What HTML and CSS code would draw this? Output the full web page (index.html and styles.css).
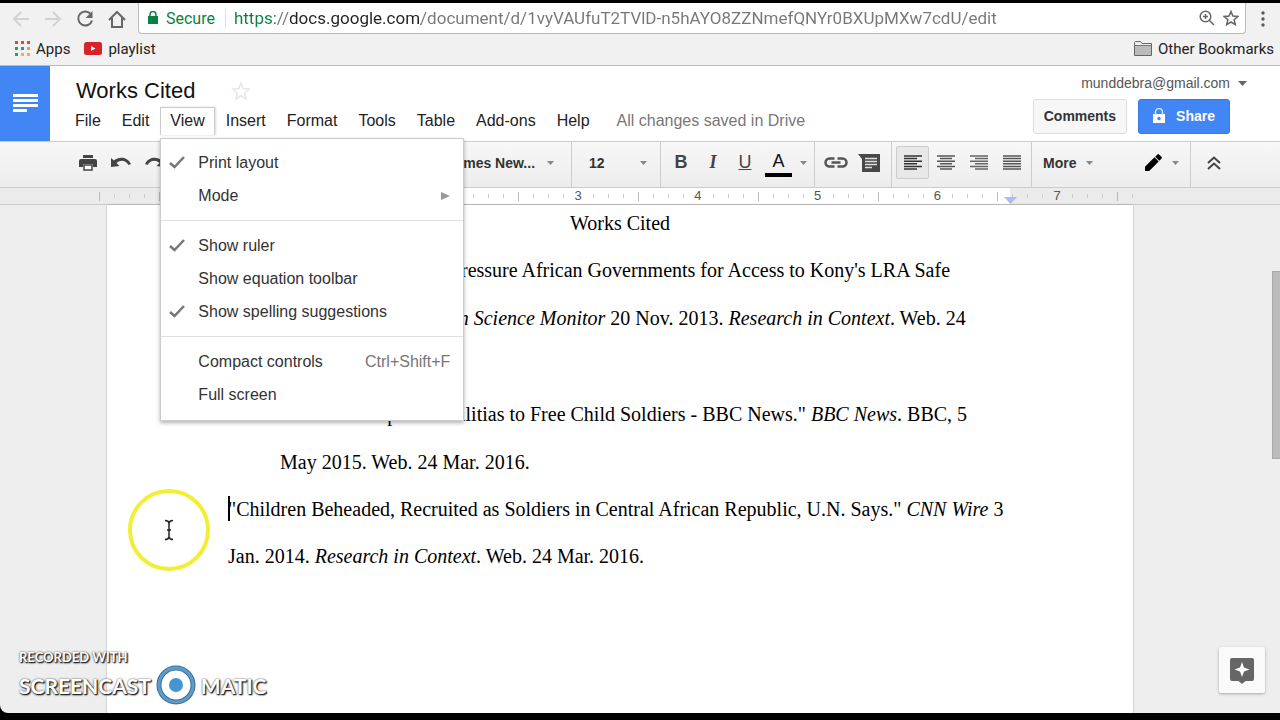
FILE: index.html
```html
<!DOCTYPE html>
<html lang="en">
<head>
    <meta charset="UTF-8">
    <meta name="viewport" content="width=device-width, initial-scale=1.0">
    <title>Works Cited</title>
    <link rel="stylesheet" href="styles.css">
</head>
<body>
    <div class="window">
        <!-- browser bar -->
        <div class="browser-bar">
            <div class="nav-btns">
                <button type="button" class="icon-btn" aria-label="Back"><svg width="18" height="18" viewBox="0 0 18 18" fill="none" stroke="#d2d2d2" stroke-width="2"><path d="M17 9H3M9 2L2 9l7 7"/></svg></button>
                <button type="button" class="icon-btn" aria-label="Forward"><svg width="18" height="18" viewBox="0 0 18 18" fill="none" stroke="#d2d2d2" stroke-width="2"><path d="M1 9h14M9 2l7 7-7 7"/></svg></button>
                <button type="button" class="icon-btn" aria-label="Reload"><svg width="18" height="18" viewBox="0 0 18 18" fill="none" stroke="#666" stroke-width="2"><path d="M15 4.500A7 7 0 1 0 16 10.500"/><path d="M16.500 1v7h-7z" fill="#666" stroke="none"/></svg></button>
                <button type="button" class="icon-btn" aria-label="Home"><svg width="18" height="18" viewBox="0 0 18 18" fill="none" stroke="#666" stroke-width="2"><path d="M1 10l8-8 8 8M4 8v9h10V8"/></svg></button>
            </div>
            <div class="address">
                <svg width="10" height="14" viewBox="0 0 10 14"><path d="M0 5h10v8H0z" fill="#0b8043"/><path d="M2 6V3.500a3 3 0 0 1 6 0V6" fill="none" stroke="#0b8043" stroke-width="1.500"/></svg>
                <label for="url" class="secure">Secure</label>
                <input type="text" id="url" class="url" value="https://docs.google.com/document/d/1vyVAUfuT2TVlD-n5hAYO8ZZNmefQNYr0BXUpMXw7cdU/edit">
                <button type="button" class="icon-btn" aria-label="Zoom"><svg width="16" height="16" viewBox="0 0 16 16" fill="none" stroke="#666" stroke-width="1.500"><circle cx="6.500" cy="6.500" r="5.300"/><path d="M10.500 10.500l4.500 4.500M6.500 4v5M4 6.500h5"/></svg></button>
                <button type="button" class="icon-btn" aria-label="Bookmark"><svg width="16" height="16" viewBox="0 0 16 16" fill="none" stroke="#666" stroke-width="1.500"><path d="M8 1.500l1.900 4.600 4.900.4-3.700 3.200 1.200 4.900L8 12l-4.300 2.600 1.200-4.900L1.200 6.500l4.900-.4z"/></svg></button>
            </div>
            <button type="button" class="icon-btn dots" aria-label="Chrome menu"><svg width="4" height="16" viewBox="0 0 4 16" fill="#5a5a5a"><circle cx="2" cy="2" r="1.700"/><circle cx="2" cy="8" r="1.700"/><circle cx="2" cy="14" r="1.700"/></svg></button>
        </div>
        <div class="bookmarks">
            <a href="#"><svg width="15" height="15" viewBox="0 0 15 15"><path d="M0 0h3v3H0zM6 0h3v3H6zM12 0h3v3h-3z" fill="#e0483c"/><path d="M0 6h3v3H0z" fill="#2f9e5b"/><path d="M6 6h3v3H6z" fill="#3f7fe0"/><path d="M12 6h3v3h-3z" fill="#eba13f"/><path d="M0 12h3v3H0z" fill="#2f9e5b"/><path d="M6 12h3v3H6zM12 12h3v3h-3z" fill="#eeb04a"/></svg>Apps</a>
            <a href="#"><svg width="18" height="13" viewBox="0 0 18 13"><rect width="18" height="13" rx="2.500" fill="#d9232a"/><path d="M7 4v5l4.500-2.500z" fill="#fff"/></svg>playlist</a>
            <a href="#" class="other"><svg width="18" height="15" viewBox="0 0 18 15"><path d="M.5 14.500V1.500l1-1h5l1.500 2h9.500v12z" fill="#eee" stroke="#666"/><path d="M1 5h16v9H1z" fill="#bbb"/><path d="M1 4.500h16" stroke="#777"/></svg>Other Bookmarks</a>
        </div>

        <!-- docs header -->
        <header class="header">
            <a href="#" class="logo" aria-label="Docs home"><svg width="25" height="19" viewBox="0 0 25 19" fill="#fff"><path d="M0 0h25v3H0zM0 5h25v3H0zM0 10h25v3H0zM0 15h14v3H0z"/></svg></a>
            <div class="header-main">
                <div class="title-row">
                    <h1>Works Cited</h1>
                    <button type="button" class="icon-btn" aria-label="Star"><svg width="20" height="20" viewBox="0 0 20 20" fill="none" stroke="#e6e6e6" stroke-width="1.500"><path d="M10 2l2.200 5.600 6 .5-4.600 3.900 1.500 6L10 14.700 4.900 18l1.500-6-4.600-3.900 6-.5z"/></svg></button>
                </div>
                <nav class="menu-bar">
                    <button type="button">File</button>
                    <button type="button">Edit</button>
                    <div class="menu-open">
                        <button type="button" class="active">View</button>
                        <div class="dropdown">
                            <button type="button"><svg class="check" width="16" height="13" viewBox="0 0 16 13"><path d="M1 7l4.500 4L15 1" fill="none" stroke="#777" stroke-width="2.500"/></svg>Print layout</button>
                            <button type="button">Mode<svg class="arrow" width="9" height="8" viewBox="0 0 9 8"><path d="M0 0l9 4-9 4z" fill="#999"/></svg></button>
                            <hr>
                            <button type="button"><svg class="check" width="16" height="13" viewBox="0 0 16 13"><path d="M1 7l4.500 4L15 1" fill="none" stroke="#777" stroke-width="2.500"/></svg>Show ruler</button>
                            <button type="button">Show equation toolbar</button>
                            <button type="button"><svg class="check" width="16" height="13" viewBox="0 0 16 13"><path d="M1 7l4.500 4L15 1" fill="none" stroke="#777" stroke-width="2.500"/></svg>Show spelling suggestions</button>
                            <hr>
                            <button type="button">Compact controls<span class="shortcut">Ctrl+Shift+F</span></button>
                            <button type="button">Full screen</button>
                        </div>
                    </div>
                    <button type="button">Insert</button>
                    <button type="button">Format</button>
                    <button type="button">Tools</button>
                    <button type="button">Table</button>
                    <button type="button">Add-ons</button>
                    <button type="button">Help</button>
                    <span class="saved">All changes saved in Drive</span>
                </nav>
            </div>
            <div class="account">
                <button type="button" class="email">munddebra@gmail.com<svg width="9" height="5" viewBox="0 0 9 5"><path d="M0 0h9L4.500 5z" fill="#666"/></svg></button>
                <div class="account-btns">
                    <button type="button" class="btn">Comments</button>
                    <button type="button" class="btn share"><svg width="12" height="15" viewBox="0 0 12 15"><path d="M0 6h12v9H0z" fill="#fff"/><path d="M2.500 7V4a3.500 3.500 0 0 1 7 0v3" fill="none" stroke="#d5e3fc" stroke-width="1.500"/><circle cx="6" cy="10.500" r="1.700" fill="#4285f4"/></svg>Share</button>
                </div>
            </div>
        </header>

        <!-- toolbar -->
        <div class="toolbar">
            <div class="group group-file">
                <button type="button" class="icon-btn" aria-label="Print"><svg width="18" height="16" viewBox="0 0 18 16" fill="#444"><path d="M4 0h10v3H4zM2 4h14a2 2 0 0 1 2 2v6h-4V9H4v3H0V6a2 2 0 0 1 2-2z"/><path d="M5 10h8v5H5z" fill="#fff" stroke="#444" stroke-width="1.500"/></svg></button>
                <button type="button" class="icon-btn" aria-label="Undo"><svg width="20" height="11" viewBox="0 0 20 11" fill="#444"><path d="M0 1l3 2.500C8-.5 16-.5 20 7l-2.500 1C14 2.500 9 3 5.500 6l3 3L0 10z"/></svg></button>
                <button type="button" class="icon-btn" aria-label="Redo"><svg width="20" height="11" viewBox="0 0 20 11" fill="#444"><path d="M20 1l-3 2.500C12-.5 4-.5 0 7l2.500 1C6 2.500 11 3 14.500 6l-3 3 8.500 1z"/></svg></button>
            </div>
            <div class="group group-font">
                <select aria-label="Font"><option>Times New...</option></select>
                <svg class="caret" width="7" height="4" viewBox="0 0 7 4"><path d="M0 0h7L3.500 4z"/></svg>
            </div>
            <div class="group group-size">
                <select aria-label="Font size"><option>12</option></select>
                <svg class="caret" width="7" height="4" viewBox="0 0 7 4"><path d="M0 0h7L3.500 4z"/></svg>
            </div>
            <div class="group group-text">
                <button type="button" class="glyph bold" aria-label="Bold">B</button>
                <button type="button" class="glyph italic" aria-label="Italic">I</button>
                <button type="button" class="glyph underline" aria-label="Underline">U</button>
                <button type="button" class="glyph color" aria-label="Text color">A</button>
                <svg class="caret" width="7" height="4" viewBox="0 0 7 4"><path d="M0 0h7L3.500 4z"/></svg>
            </div>
            <div class="group group-insert">
                <button type="button" class="icon-btn" aria-label="Insert link"><svg width="24" height="11" viewBox="0 0 24 11" fill="none" stroke="#555" stroke-width="2.500"><path d="M10.500 1.500H5.500a4 4 0 0 0 0 8h5M13.500 1.500h5a4 4 0 0 1 0 8h-5M7.500 5.500h9"/></svg></button>
                <button type="button" class="icon-btn" aria-label="Add comment"><svg width="22" height="18" viewBox="0 0 22 18"><path d="M0 0h22v18H4V5z" fill="#484848"/><path d="M7 4.500h12M7 7.500h12M7 10.500h12M7 13.500h7" stroke="#ddd" stroke-width="1.500"/></svg></button>
            </div>
            <div class="group group-align">
                <button type="button" class="icon-btn on" aria-label="Align left"><svg width="18" height="15" viewBox="0 0 18 15" stroke="#333" stroke-width="1.500"><path d="M0 1h18M0 3.600h13M0 6.200h18M0 8.800h13M0 11.400h18M0 14h13"/></svg></button>
                <button type="button" class="icon-btn" aria-label="Align center"><svg width="18" height="15" viewBox="0 0 18 15" stroke="#555" stroke-width="1.500"><path d="M0 1h18M3 3.600h12M0 6.200h18M3 8.800h12M0 11.400h18M3 14h12"/></svg></button>
                <button type="button" class="icon-btn" aria-label="Align right"><svg width="18" height="15" viewBox="0 0 18 15" stroke="#666" stroke-width="1.500"><path d="M0 1h18M5 3.600h13M0 6.200h18M5 8.800h13M0 11.400h18M5 14h13"/></svg></button>
                <button type="button" class="icon-btn" aria-label="Justify"><svg width="18" height="15" viewBox="0 0 18 15" stroke="#555" stroke-width="1.500"><path d="M0 1h18M0 3.600h18M0 6.200h18M0 8.800h18M0 11.400h18M0 14h18"/></svg></button>
            </div>
            <div class="group group-more">
                <button type="button" class="more">More<svg class="caret" width="7" height="4" viewBox="0 0 7 4"><path d="M0 0h7L3.500 4z"/></svg></button>
                <button type="button" class="more" aria-label="Editing mode"><svg width="17" height="17" viewBox="0 0 18 18" fill="#000"><path d="M0 18v-4.500L10 3.500l4.500 4.500L4.500 18zM10.700 2.800L13.200.4q.8-.6 1.600 0L17.500 3q.8.8 0 1.700L15.200 7.200z"/></svg><svg class="caret" width="7" height="4" viewBox="0 0 7 4"><path d="M0 0h7L3.500 4z"/></svg></button>
            </div>
            <div class="group group-hide">
                <button type="button" class="icon-btn" aria-label="Hide the menus"><svg width="14" height="14" viewBox="0 0 14 14" fill="none" stroke="#444" stroke-width="2"><path d="M1 7l6-5.500L13 7M1 13l6-5.500 6 5.500"/></svg></button>
            </div>
        </div>

        <!-- ruler -->
        <div class="ruler">
            <div class="edge"></div>
            <div class="inch first"></div>
            <div class="inch"><span>1</span></div>
            <div class="inch"><span>2</span></div>
            <div class="inch"><span>3</span></div>
            <div class="inch"><span>4</span></div>
            <div class="inch"><span>5</span></div>
            <div class="inch"><span>6</span></div>
            <div class="inch last"><svg class="marker" width="13" height="7" viewBox="0 0 13 7"><path d="M0 0h13L6.500 7z" fill="#a9bdf0"/></svg><span>7</span></div>
            <div class="edge end"></div>
        </div>

        <main class="canvas">
            <article class="page">
                <h2>Works Cited</h2>
                <p>Bugnacky, John. "Activists Pressure African Governments for Access to Kony's LRA Safe<br>Havens." <i>The Christian Science Monitor</i> 20 Nov. 2013. <i>Research in Context</i>. Web. 24<br>Mar. 2016.</p>
                <p>"Central African Republic Militias to Free Child Soldiers - BBC News." <i>BBC News</i>. BBC, 5<br>May 2015. Web. 24 Mar. 2016.</p>
                <p class="current">"Children Beheaded, Recruited as Soldiers in Central African Republic, U.N. Says." <i>CNN Wire</i> 3<br>Jan. 2014. <i>Research in Context</i>. Web. 24 Mar. 2016.</p>
            </article>
            <div class="scroll-thumb"></div>
            <button type="button" class="explore" aria-label="Explore"><svg width="24" height="26" viewBox="0 0 24 26"><path d="M2 0h20a2 2 0 0 1 2 2v19a2 2 0 0 1-2 2h-6.500L12 26l-3.500-3H2a2 2 0 0 1-2-2V2a2 2 0 0 1 2-2z" fill="#666"/><path d="M12 4l2 5.500 5.500 2-5.500 2-2 5.500-2-5.500-5.500-2 5.500-2z" fill="#fff"/></svg></button>
        </main>

        <svg class="pointer" width="84" height="84" viewBox="0 0 84 84" fill="none"><circle cx="42" cy="42" r="39" stroke="#f3ee35" stroke-width="4"/><path d="M38 32.500q3.500 0 4 2.500.5-2.500 4-2.500M42 35v14M38 51.500q3.500 0 4-2.500.5 2.500 4 2.500M40 42h4" stroke="#222" stroke-width="1.500"/></svg>

        <div class="watermark">
            <div class="recorded">RECORDED WITH</div>
            <div class="brand">SCREENCAST<svg width="40" height="40" viewBox="0 0 40 40"><circle cx="20" cy="20" r="17" fill="#fff" stroke="#3d6f99" stroke-width="5"/><circle cx="20" cy="20" r="17" fill="none" stroke="#5e9bc9" stroke-width="3"/><circle cx="20" cy="20" r="7" fill="#4596cf"/></svg>MATIC</div>
        </div>
    </div>
</body>
</html>
```

FILE: styles.css
```css
*{margin:0;padding:0;box-sizing:border-box;}
body{height:100vh;padding:3px 0 7px;background:#000;font-family:"Liberation Sans", Arial, sans-serif;font-size:16px;color:#222;overflow:hidden;}
button,select,input{font:inherit;color:inherit;border:none;background:none;}
button{cursor:pointer;white-space:nowrap;}
svg{display:block;flex-shrink:0;}
.window{position:relative;height:100%;display:flex;flex-direction:column;background:#eee;border-radius:0 0 0 8px;overflow:hidden;}
.icon-btn{display:flex;align-items:center;justify-content:center;}

/* browser */
.browser-bar{display:flex;align-items:center;height:31px;background:#f1f1f1;font-family:Roboto, sans-serif;}
.nav-btns{display:flex;gap:14px;padding:0 12px;}
.address{flex:1;display:flex;align-items:center;gap:8px;height:31px;padding:0 6px 0 9px;background:#fff;border:1px solid #bbb;border-top:none;border-radius:0 0 4px 4px;}
.secure{color:#0b8043;padding-right:10px;border-right:1px solid #ddd;}
/* scheme in green, host dark, path grey */
.url{flex:1;min-width:0;outline:none;font-size:17px;color:transparent;background:linear-gradient(to right,#0b8043 42px,#777 42px 56px,#222 56px 187px,#777 187px);-webkit-background-clip:text;background-clip:text;}
.dots{width:34px;}
.bookmarks{display:flex;align-items:center;gap:14px;height:32px;padding:0 6px 2px 15px;background:#f1f1f1;border-bottom:1px solid #bbb;font-family:Roboto, sans-serif;font-size:15px;}
.bookmarks a{display:flex;align-items:center;gap:6px;color:#222;text-decoration:none;}
.bookmarks .other{margin-left:auto;}

/* header */
.header{display:flex;height:75px;background:#fff;}
.logo{width:50px;display:flex;align-items:center;justify-content:center;background:#4285f4;}
.header-main{flex:1;padding:8px 0 0 15px;}
.title-row{display:flex;align-items:center;gap:36px;height:33px;padding-left:11px;}
.title-row h1{font-size:22px;font-weight:normal;color:#111;}
.menu-bar{display:flex;align-items:center;gap:1px;}
.menu-bar button{height:28px;padding:0 10px;}
.menu-open{position:relative;}
.menu-bar .active{padding:0 9px 1px;border:1px solid #ccc;border-bottom:none;background:#fff;box-shadow:1px 0 2px rgba(0,0,0,0.15);}
.saved{padding-left:16px;color:#777;white-space:nowrap;}
.dropdown{position:absolute;top:31px;left:0;z-index:5;width:304px;padding:7px 0 9px;background:#fff;border:1px solid #ccc;box-shadow:0 2px 4px rgba(0,0,0,0.3);}
.menu-bar .dropdown button{position:relative;display:flex;align-items:center;width:100%;height:33px;padding:0 13px 0 37px;color:#333;}
.dropdown hr{margin:8px 0;border:none;border-top:1px solid #e0e0e0;}
.check{position:absolute;left:8px;}
.arrow,.shortcut{margin-left:auto;}
.shortcut{color:#777;}
.account{display:flex;flex-direction:column;align-items:flex-end;gap:7px;padding:8px 50px 0 0;font-size:14px;}
.email{display:flex;align-items:center;gap:8px;height:18px;margin-right:-17px;color:#555;}
.account-btns{display:flex;gap:11px;}
.btn{display:flex;align-items:center;justify-content:center;height:35px;padding:0 10px 2px;border:1px solid #ddd;border-radius:3px;background:#f7f7f7;color:#333;font-weight:bold;}
.share{gap:11px;padding:0 14px 2px;border-color:#3b78e7;background:#4285f4;color:#fff;}

/* toolbar */
.toolbar{display:flex;height:47px;background:linear-gradient(#f7f7f7,#ededed);border-top:1px solid #ccc;border-bottom:1px solid #ccc;font-size:14px;font-weight:bold;color:#333;}
.group{display:flex;align-items:center;padding-bottom:4px;border-right:1px solid #ccc;}
.caret{fill:#888;}
.group-file{width:437px;gap:14px;padding-left:79px;border:none;}
.group-font{width:135px;padding-left:14px;padding-right:17px;}
.group-size{width:89px;padding-left:17px;padding-right:13px;}
.toolbar select{flex:1;min-width:0;appearance:none;outline:none;}
.group-text{width:154px;padding-left:4px;}
.glyph{width:32px;height:32px;font-family:"Liberation Serif", serif;font-size:18px;color:#444;}
.bold{font-family:"Liberation Sans", Arial, sans-serif;font-weight:bold;}
.italic{font-weight:bold;font-style:italic;}
.underline{font-family:"Liberation Sans", Arial, sans-serif;font-weight:normal;text-decoration:underline;}
.color{width:27px;height:26px;margin:2px 8px 0 4px;border-bottom:4px solid #000;font-family:"Liberation Sans", Arial, sans-serif;font-weight:normal;color:#111;}
.group-insert{width:77px;padding-left:9px;gap:10px;}
.group-align{width:140px;padding-left:4px;}
.group-align .icon-btn{width:33px;height:33px;}
.group-align .on{border:1px solid #ccc;border-radius:2px;background:#e8e8e8;}
.group-more{flex:1;justify-content:space-between;padding-left:11px;padding-right:11px;}
.more{display:flex;align-items:center;gap:10px;}
.group-hide{width:89px;padding-left:16px;border:none;}

/* ruler */
.ruler{display:flex;align-items:center;height:17px;padding:0 145px 0 99px;border-bottom:1px solid #ccc;background:#ebebeb;font-size:13px;line-height:16px;color:#555;}
.inch,.edge{position:relative;height:16px;background:repeating-linear-gradient(to right,#ccc 0 1px,transparent 1px 15px) center / 100% 4px no-repeat;}
.inch{flex:1;text-align:center;background:repeating-linear-gradient(to right,#ccc 0 1px,transparent 1px 12.5%) center / 100% 4px no-repeat #fff;}
.inch::before,.edge::before{content:"";display:block;position:absolute;left:0;top:4px;width:1px;height:9px;background:#bbb;}
.inch span{padding:0 4px;background:#fff;}
.first{background-color:#ebebeb;}
.last{background:repeating-linear-gradient(to right,#ccc 0 1px,transparent 1px 12.5%) center / 100% 4px no-repeat,linear-gradient(to right,#fff 13px,#ebebeb 13px);}
.inch.last span{background:#ebebeb;}
.edge{width:60px;}
.end{width:18px;}
.marker{position:absolute;left:7px;bottom:0;}

/* document */
.canvas{position:relative;flex:1;display:flex;min-height:0;padding:0 147px 0 107px;}
.page{flex:1;padding:0 121px;background:#fff;box-shadow:0 0 2px rgba(0,0,0,0.3);font-family:"Liberation Serif", "Times New Roman", serif;font-size:20px;line-height:48px;color:#000;white-space:nowrap;}
.page h2{height:41px;line-height:36px;font-size:20px;font-weight:normal;text-align:center;}
.page p{padding-left:52px;text-indent:-52px;}
.page .current{padding-left:0;text-indent:0;line-height:47px;}
.current::before{content:"";position:absolute;width:2px;height:25px;margin-top:10px;background:#000;}
.scroll-thumb{position:absolute;right:0;top:66px;width:8px;height:188px;background:#bbb;border:1px solid #aaa;border-right:none;}
.explore{position:absolute;right:15px;bottom:20px;width:46px;height:46px;display:flex;align-items:center;justify-content:center;padding-top:2px;background:#fafafa;border-radius:2px;box-shadow:0 1px 3px rgba(0,0,0,0.3);}

/* recording overlays */
.pointer{position:absolute;left:127px;top:485px;}
.watermark{position:absolute;left:19px;bottom:8px;font-family:Lato, sans-serif;font-weight:bold;color:#fff;text-shadow:1px 1px 1px #222,1px 1px 2px #444,0 0 2px #555;}
.recorded{font-size:13px;line-height:16px;}
.brand{display:flex;align-items:center;gap:5px;font-size:21px;}
```
